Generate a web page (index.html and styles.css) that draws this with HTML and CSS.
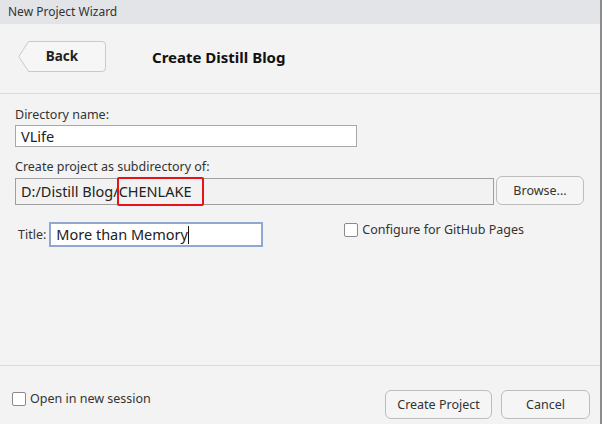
FILE: index.html
```html
<!DOCTYPE html>
<html>
<head>
<meta charset="utf-8">
<link rel="stylesheet" href="styles.css">
</head>
<body>
<div class="window">
  <div class="titlebar">New Project Wizard</div>
  <div class="header">
    <button class="back">
      <svg class="back-shape" width="88" height="31" viewBox="0 0 88 31"><path d="M10.5 0.5 H84 Q87.5 0.5 87.5 4 V27 Q87.5 30.5 84 30.5 H10.5 L0.8 15.5 Z" fill="#f6f6f6" stroke="#c9c9c9"/></svg>
      <span class="back-label">Back</span>
    </button>
    <h1 class="heading">Create Distill Blog</h1>
  </div>
  <div class="content">
    <div class="field">
      <label class="label">Directory name:</label>
      <div class="input name-input">VLife</div>
    </div>
    <div class="field">
      <label class="label">Create project as subdirectory of:</label>
      <div class="path-row">
        <div class="input path-input">D:/Distill Blog/<span class="hl">CHENLAKE</span></div>
        <button class="btn browse">Browse...</button>
      </div>
    </div>
    <div class="options-row">
      <div class="title-field">
        <label class="label">Title:</label>
        <div class="input title-input">More than Memory<span class="caret"></span></div>
      </div>
      <label class="check gh"><span class="box"></span>Configure for GitHub Pages</label>
    </div>
  </div>
  <div class="footer">
    <label class="check session"><span class="box"></span>Open in new session</label>
    <div class="actions">
      <button class="btn create">Create Project</button>
      <button class="btn cancel">Cancel</button>
    </div>
  </div>
</div>
</body>
</html>
```

FILE: styles.css
```css
* { box-sizing: border-box; }
html, body { margin: 0; padding: 0; }
body {
  width: 602px;
  height: 424px;
  overflow: hidden;
  background: #f3f3f3;
  font-family: "Noto Sans", "Open Sans", sans-serif;
  color: #333;
}
.window {
  height: 424px;
  display: flex;
  flex-direction: column;
  border-right: 2px solid #8c8c8c;
  background: #f3f3f3;
}
.titlebar {
  height: 24px;
  line-height: 23px;
  padding-left: 8px;
  font-size: 12px;
  background: #e3e4e8;
  color: #333;
}
.header {
  height: 70px;
  display: flex;
  align-items: center;
  border-bottom: 1px solid #d9d9d9;
  padding-left: 18px;
}
.back {
  position: relative;
  width: 88px;
  height: 31px;
  padding: 0;
  border: none;
  background: none;
  font-family: inherit;
  margin-top: -4px;
}
.back-shape { position: absolute; left: 0; top: 0; }
.back-label {
  position: relative;
  display: block;
  padding-left: 0;
  font-size: 13.5px;
  font-weight: bold;
  color: #222;
  line-height: 31px;
  text-align: center;
}
.heading {
  margin: 0 0 0 46px;
  font-size: 15px;
  font-weight: bold;
  color: #111;
  margin-top: -4px;
}
.content {
  flex: 1;
  padding: 12px 9px 0 15px;
  display: flex;
  flex-direction: column;
}
.field { display: flex; flex-direction: column; }
.label {
  font-size: 12.5px;
  line-height: 18px;
  color: #333;
}
.input {
  background: #fff;
  border: 1px solid #a8a8a8;
  font-size: 14.5px;
  color: #222;
  padding-left: 5px;
  white-space: nowrap;
}
.name-input {
  width: 342px;
  height: 22px;
  line-height: 20px;
  margin-top: 1px;
  margin-bottom: 11px;
}
.path-row {
  display: flex;
  align-items: center;
  margin-top: 1px;
}
.path-input {
  width: 479px;
  height: 27px;
  line-height: 25px;
  background: #f2f2f2;
  border-color: #9f9f9f;
  position: relative;
}
.hl {
  position: relative;
}
.hl::before {
  content: "";
  position: absolute;
  left: -2px;
  right: -12px;
  top: -4px;
  bottom: -5px;
  border: 2.5px solid #e5131a;
  border-radius: 2px;
}
.btn {
  height: 29px;
  border: 1px solid #bdbdbd;
  border-radius: 6px;
  background: #f5f5f5;
  font-family: inherit;
  font-size: 12.5px;
  color: #333;
  padding: 0;
}
.browse {
  width: 88px;
  margin-left: 2px;
  margin-top: -1px;
}
.options-row {
  display: flex;
  align-items: flex-start;
  margin-top: 17px;
}
.title-field {
  display: flex;
  align-items: center;
  padding-left: 3px;
}
.title-input {
  margin-left: 3px;
  width: 214px;
  height: 25px;
  line-height: 21px;
  border: 2px solid #91a7cf;
  padding-left: 5px;
}
.caret {
  display: inline-block;
  width: 1px;
  height: 18px;
  background: #111;
  vertical-align: middle;
  margin-top: -3px;
}
.check {
  display: flex;
  align-items: center;
  font-size: 12.5px;
  color: #333;
}
.box {
  width: 14px;
  height: 14px;
  border: 1px solid #8a8a8a;
  border-radius: 2px;
  background: #fff;
  margin-right: 4px;
}
.gh {
  margin-left: 81px;
  margin-top: -1px;
}
.footer {
  height: 59px;
  border-top: 1px solid #d9d9d9;
  display: flex;
  align-items: center;
  justify-content: space-between;
  padding: 0 10px 0 12px;
}
.session { margin-top: 7px; }
.actions {
  display: flex;
  gap: 9px;
  margin-top: 19px;
}
.create { width: 107px; }
.cancel { width: 89px; }
```
